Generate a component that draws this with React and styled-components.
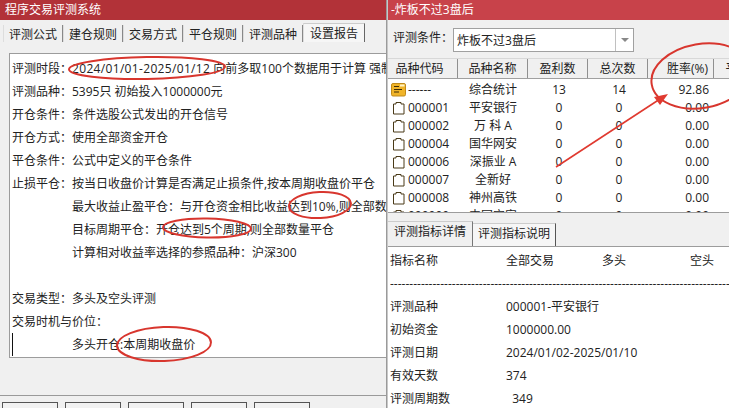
import React from "react";
import styled, { createGlobalStyle } from "styled-components";

const Global = createGlobalStyle`
  html, body { margin: 0; padding: 0; background: #f0f0f0; }
  body { font-family: "Open Sans", "Noto Sans CJK SC", sans-serif; font-size: 12px; color: #222; }
`;

const Page = styled.div`
  position: relative;
  width: 729px;
  height: 408px;
  display: flex;
  overflow: hidden;
`;

const LeftPane = styled.div`
  width: 386px;
  display: flex;
  flex-direction: column;
  border-right: 1px solid #9a9a9a;
`;

const RightPane = styled.div`
  flex: 1;
  min-width: 0;
  display: flex;
  flex-direction: column;
  border-left: 1px solid #c8c8c8;
`;

const TitleBar = styled.div`
  height: 20px;
  line-height: 19px;
  padding-left: ${(p) => p.$pad}px;
  background: ${(p) => p.$bg};
  color: #fff;
  font-size: 12px;
  flex: none;
`;

const TabStrip = styled.div`
  height: 19px;
  margin-top: 3px;
  padding-left: 3px;
  display: flex;
  align-items: flex-end;
  flex: none;
`;

const Tab = styled.div`
  width: ${(p) => (p.$active ? 62 : 60)}px;
  height: ${(p) => (p.$active ? 19 : 17)}px;
  line-height: ${(p) => (p.$active ? 19 : 20)}px;
  box-sizing: border-box;
  text-align: center;
  border-right: 1px solid ${(p) => (p.$active ? "#666" : "#888")};
  border-top: ${(p) => (p.$active ? "1px solid #ccc" : "none")};
  border-left: 1px solid #ddd;
  background: ${(p) => (p.$active ? "#f6f6f6" : "#f0f0f0")};
`;

const ReportBox = styled.div`
  margin: 11px 0 0 9px;
  height: 305px;
  padding: 3px 0 0 2px;
  box-sizing: border-box;
  background: #fff;
  border: 1px solid #9c9c9c;
  border-right: none;
  overflow: hidden;
  flex: none;
  position: relative;
`;

const ReportLine = styled.div`
  height: 23px;
  line-height: 23px;
  white-space: nowrap;
  padding-left: ${(p) => p.$indent || 0}px;
`;

const DateText = styled.span`
  letter-spacing: 0.33px;
`;

const Caret = styled.div`
  position: absolute;
  left: 2px;
  top: 279px;
  width: 1px;
  height: 23px;
  background: #111;
`;

const Toolbar = styled.div`
  margin-top: 37px;
  border-top: 1px solid #9a9a9a;
  padding: 6px 0 0 2px;
  display: flex;
  gap: 7px;
  flex: none;
`;

const ToolButton = styled.div`
  width: 56px;
  height: 20px;
  line-height: 26px;
  text-align: center;
  border: 1px solid #555;
  box-sizing: border-box;
  background: #f2f2f2;
  font-size: 12px;
`;

const ConditionRow = styled.div`
  height: 38px;
  flex: none;
  display: flex;
  align-items: center;
  padding-left: 5px;
`;

const ConditionLabel = styled.span`
  margin-bottom: 4px;
`;

const Combo = styled.div`
  width: 181px;
  height: 24px;
  box-sizing: border-box;
  display: flex;
  border: 1px solid #a0a0a0;
  background: #fff;
  line-height: 23px;
  margin-top: 1px;
`;

const ComboText = styled.div`
  flex: 1;
  padding-left: 3px;
`;

const ComboArrow = styled.div`
  width: 17px;
  border-left: 1px solid #c0c0c0;
  display: flex;
  align-items: center;
  justify-content: center;
  &::after {
    content: "";
    border: 4px solid transparent;
    border-top: 4px solid #888;
    border-bottom: none;
  }
`;

const Grid = styled.div`
  height: 155px;
  background: #fff;
  flex: none;
  overflow: hidden;
  border-bottom: 1px solid #9c9c9c;
  box-sizing: border-box;
`;

const HeaderRow = styled.div`
  display: flex;
  height: 21px;
  background: #f0f0f0;
  border-top: 1px solid #d8d8d8;
  border-bottom: 1px solid #a0a0a0;
  box-sizing: border-box;
  margin-bottom: 2px;
`;

const HeaderCell = styled.div`
  width: ${(p) => p.$w}px;
  flex: none;
  text-align: ${(p) => p.$align || "center"};
  padding-right: ${(p) => p.$pad || 0}px;
  line-height: 20px;
  border-right: 1px solid #909090;
  box-sizing: border-box;
  white-space: nowrap;
  overflow: hidden;
`;

const Row = styled.div`
  display: flex;
  height: 18px;
  line-height: 18px;
`;

const CodeCell = styled.div`
  width: 70px;
  flex: none;
  display: flex;
  align-items: center;
  gap: 2px;
  padding-left: 3px;
  box-sizing: border-box;
`;

const NameCell = styled.div`
  width: 70px;
  flex: none;
  text-align: center;
  margin-left: 2px;
  padding-right: 4px;
  box-sizing: border-box;
`;

const NumCell = styled.div`
  width: 60px;
  flex: none;
  text-align: center;
  margin-left: -1px;
  margin-right: 1px;
  box-sizing: border-box;
`;

const RateCell = styled.div`
  width: 59px;
  flex: none;
  text-align: right;
  box-sizing: border-box;
`;

const DetailTabs = styled.div`
  height: 33px;
  padding: 8px 0 0 0;
  box-sizing: border-box;
  display: flex;
  align-items: flex-end;
  flex: none;
`;

const DetailTab = styled.div`
  width: ${(p) => (p.$active ? 85 : 83)}px;
  height: ${(p) => (p.$active ? 25 : 23)}px;
  line-height: 20px;
  text-align: center;
  background: ${(p) => (p.$active ? "#f0f0f0" : "#f6f6f6")};
  border-right: 1px solid ${(p) => (p.$active ? "#777" : "#555")};
  border-top: 1px solid #ccc;
  box-sizing: border-box;
`;

const DetailBody = styled.div`
  flex: 1;
  min-height: 0;
  background: #fff;
  border-top: 1px solid #9c9c9c;
  padding: 2px 0 0 2px;
  overflow: hidden;
`;

const DetailRow = styled.div`
  display: flex;
  height: 23px;
  line-height: 23px;
  white-space: pre;
`;

const DetailCell = styled.div`
  width: ${(p) => p.$w}px;
  flex: none;
  box-sizing: border-box;
`;

const Dashes = styled.div`
  height: 23px;
  line-height: 23px;
  white-space: nowrap;
  overflow: hidden;
`;

const Overlay = styled.svg`
  position: absolute;
  left: 0;
  top: 0;
  pointer-events: none;
`;

const FolderIcon = ({ gold }) =>
  gold ? (
    <svg width="15" height="14" viewBox="0 0 15 14">
      <rect x=".5" y=".5" width="14" height="12.5" rx="1.5" fill="#f0b429" stroke="#c08a1a" />
      <path d="M3 3.5 H8 M3 6.5 H11 M3 9 H8" stroke="#3d2c08" strokeWidth="1.2" />
      <rect x="9" y="1.5" width="4.5" height="2" fill="#fff3c8" />
    </svg>
  ) : (
    <svg width="15" height="14" viewBox="0 0 15 14">
      <path d="M2.5 13 V3 H5 V1.5 H10 V3 H13 V13 Z" fill="#fff" stroke="#4a3a18" strokeWidth="1" />
    </svg>
  );

const tabs = ["评测公式", "建仓规则", "交易方式", "平仓规则", "评测品种", "设置报告"];

const report = [
  "评测品种：5395只 初始投入1000000元",
  "开仓条件：条件选股公式发出的开仓信号",
  "开仓方式：使用全部资金开仓",
  "平仓条件：公式中定义的平仓条件",
  "止损平仓：按当日收盘价计算是否满足止损条件,按本周期收盘价平仓",
];

const indented = [
  "最大收益止盈平仓：与开仓资金相比收益达到10%,则全部数量平仓",
  "目标周期平仓：开仓达到5个周期,则全部数量平仓",
  "计算相对收益率选择的参照品种：沪深300",
];

const stocks = [
  ["000001", "平安银行"],
  ["000002", "万 科 A"],
  ["000004", "国华网安"],
  ["000006", "深振业 A"],
  ["000007", "全新好"],
  ["000008", "神州高铁"],
  ["000009", "中国宝安"],
];

const details = [
  ["评测品种", "000001-平安银行"],
  ["初始资金", "1000000.00"],
  ["评测日期", "2024/01/02-2025/01/10"],
  ["有效天数", "374"],
  ["评测周期数", "  349"],
];

export default function App() {
  return (
    <Page>
      <Global />
      <LeftPane>
        <TitleBar $bg="#b23238" $pad={5}>程序交易评测系统</TitleBar>
        <TabStrip>
          {tabs.map((t, i) => (
            <Tab key={t} $active={i === 5}>{t}</Tab>
          ))}
        </TabStrip>
        <ReportBox>
          <ReportLine>
            评测时段：<DateText>2024/01/01-2025/01/12</DateText> 向前多取100个数据用于计算 强制平仓
          </ReportLine>
          {report.map((t) => (
            <ReportLine key={t}>{t}</ReportLine>
          ))}
          {indented.map((t) => (
            <ReportLine key={t} $indent={60}>{t}</ReportLine>
          ))}
          <ReportLine />
          <ReportLine>交易类型：多头及空头评测</ReportLine>
          <ReportLine>交易时机与价位：</ReportLine>
          <ReportLine $indent={60}>多头开仓:本周期收盘价</ReportLine>
          <Caret />
        </ReportBox>
        <Toolbar>
          {["刷新公式", "重新评测", "图形数据", "加入板块", "取消"].map((b) => (
            <ToolButton key={b}>{b}</ToolButton>
          ))}
        </Toolbar>
      </LeftPane>
      <RightPane>
        <TitleBar $bg="#c8424a" $pad={3}>-炸板不过3盘后</TitleBar>
        <ConditionRow>
          <ConditionLabel>评测条件：</ConditionLabel>
          <Combo>
            <ComboText>炸板不过3盘后</ComboText>
            <ComboArrow />
          </Combo>
        </ConditionRow>
        <Grid>
          <HeaderRow>
            <HeaderCell $w={70} $pad={6}>品种代码</HeaderCell>
            <HeaderCell $w={70}>品种名称</HeaderCell>
            <HeaderCell $w={60}>盈利数</HeaderCell>
            <HeaderCell $w={60}>总次数</HeaderCell>
            <HeaderCell $w={66} $align="right" $pad={5}>胜率(%)</HeaderCell>
            <HeaderCell $w={48}>平均</HeaderCell>
          </HeaderRow>
          <Row>
            <CodeCell><FolderIcon gold />------</CodeCell>
            <NameCell>综合统计</NameCell>
            <NumCell>13</NumCell>
            <NumCell>14</NumCell>
            <RateCell>92.86</RateCell>
          </Row>
          {stocks.map(([code, name]) => (
            <Row key={code}>
              <CodeCell><FolderIcon />{code}</CodeCell>
              <NameCell>{name}</NameCell>
              <NumCell>0</NumCell>
              <NumCell>0</NumCell>
              <RateCell>0.00</RateCell>
            </Row>
          ))}
        </Grid>
        <DetailTabs>
          <DetailTab $active>评测指标详情</DetailTab>
          <DetailTab>评测指标说明</DetailTab>
        </DetailTabs>
        <DetailBody>
          <DetailRow>
            <DetailCell $w={116}>指标名称</DetailCell>
            <DetailCell $w={96}>全部交易</DetailCell>
            <DetailCell $w={88}>多头</DetailCell>
            <DetailCell $w={40}>空头</DetailCell>
          </DetailRow>
          <Dashes>{"-".repeat(90)}</Dashes>
          {details.map(([k, v]) => (
            <DetailRow key={k}>
              <DetailCell $w={116}>{k}</DetailCell>
              <DetailCell $w={200}>{v}</DetailCell>
            </DetailRow>
          ))}
        </DetailBody>
      </RightPane>
      <Overlay width="729" height="408" viewBox="0 0 729 408" fill="none">
        <g stroke="#d8362e" strokeWidth="2">
          <ellipse cx="147" cy="68" rx="78" ry="11" transform="rotate(-1 147 68)" />
          <ellipse cx="320" cy="205" rx="31" ry="13" transform="rotate(-3 320 205)" />
          <ellipse cx="207" cy="228" rx="44" ry="9.5" transform="rotate(1 207 228)" />
          <ellipse cx="164" cy="344" rx="47" ry="17" transform="rotate(-2 164 344)" />
          <ellipse cx="701" cy="76" rx="50" ry="32" transform="rotate(-10 701 76)" />
        </g>
        <path d="M556 167 L660 99" stroke="#e03a30" strokeWidth="1.6" />
        <path d="M668 94 L654 97 L660 105 Z" fill="#e03a30" />
      </Overlay>
    </Page>
  );
}
